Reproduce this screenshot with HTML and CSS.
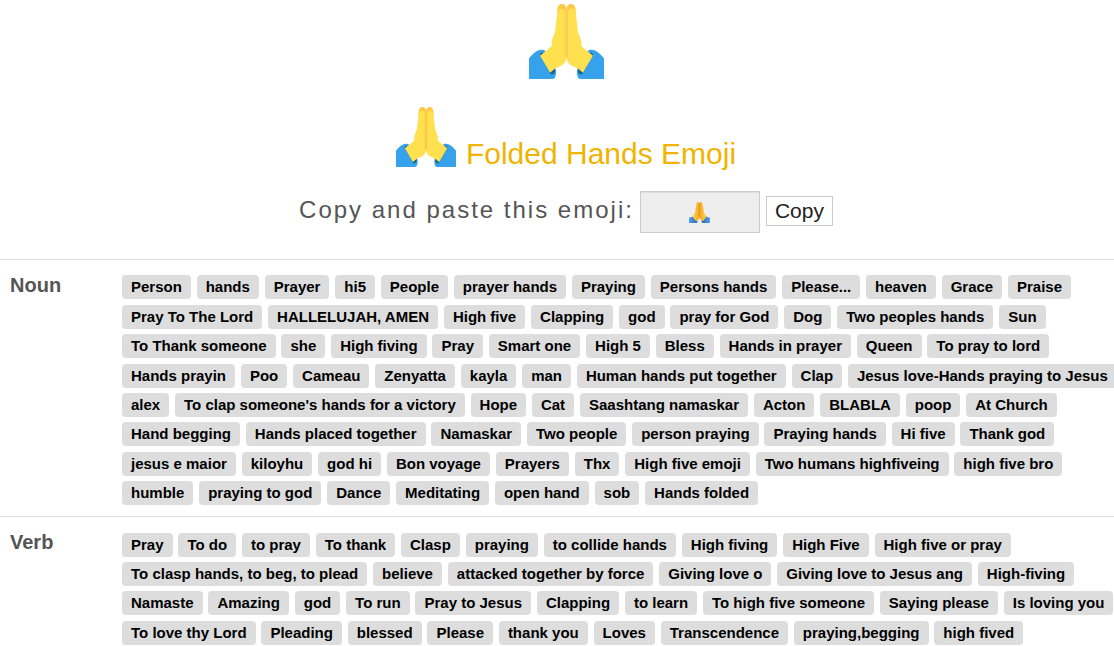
FILE: index.html
```html
<!DOCTYPE html>
<html lang="en">
<head>
    <meta charset="utf-8">
    <title>Folded Hands Emoji</title>
    <link rel="stylesheet" href="styles.css">
</head>
<body>
    <svg width="0" height="0" class="defs" aria-hidden="true">
        <symbol id="hands" viewBox="0 0 36 36">
            <g id="half">
                <path fill="#36a2eb" d="M0 26.200C2 23.500 4.200 22 6 22c1 0 1.600.2 2 .8l4.700 8.200c.3 1 .4 2 .2 2.800-.2 1.300-.6 2.200-1.700 2.200H0z"/>
                <path fill="#1a6691" d="M5.300 24.600c0-1 .6-1.600 1.400-1.200l5.800 8.100c.1 1.700-.6 2.500-2.100 2.200z"/>
                <path fill="#ffc845" d="M13.500 4C13.600 1.200 14.300 0 15.800 0 17.200 0 18 1 18 2.500V26l-3-1z"/>
                <path fill="#ffe04f" d="M17.300 4.400c0-1.300-.7-2.100-1.800-2.100-1.200 0-1.900.8-2 2.100l-.9 8.300c-.1 1.500-1.700 4-1.700 5.600v1.900L5.300 24.800 10.100 33 12.500 31C14.500 30 17.300 29.500 18 26.200c-.5-.3-.7-.7-.7-1.200z"/>
            </g>
            <use href="#half" transform="matrix(-1 0 0 1 36 0)"/>
        </symbol>
    </svg>

    <div class="header">
        <svg class="emoji-large" role="img" aria-label="Folded Hands"><use href="#hands"/></svg>
        <h1><svg class="emoji-title" aria-hidden="true"><use href="#hands"/></svg><span>Folded Hands Emoji</span></h1>
        <div class="copy">
            <label for="emoji">Copy and paste this emoji:</label>
            <input type="text" id="emoji" readonly>
            <button type="button">Copy</button>
        </div>
    </div>

    <table class="meanings">
        <tr>
            <th scope="row">Noun</th>
            <td>
                <a href="#">Person</a> <a href="#">hands</a> <a href="#">Prayer</a> <a href="#">hi5</a> <a href="#">People</a> <a href="#">prayer hands</a> <a href="#">Praying</a> <a href="#">Persons hands</a> <a href="#">Please...</a> <a href="#">heaven</a> <a href="#">Grace</a> <a href="#">Praise</a><br>
                <a href="#">Pray To The Lord</a> <a href="#">HALLELUJAH, AMEN</a> <a href="#">High five</a> <a href="#">Clapping</a> <a href="#">god</a> <a href="#">pray for God</a> <a href="#">Dog</a> <a href="#">Two peoples hands</a> <a href="#">Sun</a><br>
                <a href="#">To Thank someone</a> <a href="#">she</a> <a href="#">High fiving</a> <a href="#">Pray</a> <a href="#">Smart one</a> <a href="#">High 5</a> <a href="#">Bless</a> <a href="#">Hands in prayer</a> <a href="#">Queen</a> <a href="#">To pray to lord</a><br>
                <a href="#">Hands prayin</a> <a href="#">Poo</a> <a href="#">Cameau</a> <a href="#">Zenyatta</a> <a href="#">kayla</a> <a href="#">man</a> <a href="#">Human hands put together</a> <a href="#">Clap</a> <a href="#">Jesus love-Hands praying to Jesus</a><br>
                <a href="#">alex</a> <a href="#">To clap someone's hands for a victory</a> <a href="#">Hope</a> <a href="#">Cat</a> <a href="#">Saashtang namaskar</a> <a href="#">Acton</a> <a href="#">BLABLA</a> <a href="#">poop</a> <a href="#">At Church</a><br>
                <a href="#">Hand begging</a> <a href="#">Hands placed together</a> <a href="#">Namaskar</a> <a href="#">Two people</a> <a href="#">person praying</a> <a href="#">Praying hands</a> <a href="#">Hi five</a> <a href="#">Thank god</a><br>
                <a href="#">jesus e maior</a> <a href="#">kiloyhu</a> <a href="#">god hi</a> <a href="#">Bon voyage</a> <a href="#">Prayers</a> <a href="#">Thx</a> <a href="#">High five emoji</a> <a href="#">Two humans highfiveing</a> <a href="#">high five bro</a><br>
                <a href="#">humble</a> <a href="#">praying to god</a> <a href="#">Dance</a> <a href="#">Meditating</a> <a href="#">open hand</a> <a href="#">sob</a> <a href="#">Hands folded</a>
            </td>
        </tr>
        <tr>
            <th scope="row">Verb</th>
            <td>
                <a href="#">Pray</a> <a href="#">To do</a> <a href="#">to pray</a> <a href="#">To thank</a> <a href="#">Clasp</a> <a href="#">praying</a> <a href="#">to collide hands</a> <a href="#">High fiving</a> <a href="#">High Five</a> <a href="#">High five or pray</a><br>
                <a href="#">To clasp hands, to beg, to plead</a> <a href="#">believe</a> <a href="#">attacked together by force</a> <a href="#">Giving love o</a> <a href="#">Giving love to Jesus ang</a> <a href="#">High-fiving</a><br>
                <a href="#">Namaste</a> <a href="#">Amazing</a> <a href="#">god</a> <a href="#">To run</a> <a href="#">Pray to Jesus</a> <a href="#">Clapping</a> <a href="#">to learn</a> <a href="#">To high five someone</a> <a href="#">Saying please</a> <a href="#">Is loving you</a><br>
                <a href="#">To love thy Lord</a> <a href="#">Pleading</a> <a href="#">blessed</a> <a href="#">Please</a> <a href="#">thank you</a> <a href="#">Loves</a> <a href="#">Transcendence</a> <a href="#">praying,begging</a> <a href="#">high fived</a>
            </td>
        </tr>
    </table>
</body>
</html>
```
FILE: styles.css
```css
body {
    margin: 0;
    overflow-x: hidden;
    background: #fff;
    color: #555;
    font-family: "Liberation Sans", Arial, sans-serif;
    font-size: 21px;
    line-height: 1.4;
}

.defs {
    display: block;
}

.header {
    display: flex;
    flex-direction: column;
    align-items: center;
    padding: 4px 0 26px 18px;
}

.emoji-large {
    width: 75px;
    height: 75px;
}

.emoji-title {
    width: 60px;
    height: 60px;
}

h1 {
    display: flex;
    align-items: flex-end;
    gap: 10px;
    margin: 28px 0 24px;
    color: #f0b400;
    font-size: 30px;
    font-weight: normal;
    line-height: 26px;
}

.copy {
    display: flex;
    align-items: center;
    gap: 6px;
}

.copy label {
    font-size: 24px;
    line-height: 30px;
    letter-spacing: 2px;
    padding-bottom: 4px;
}

.copy input {
    box-sizing: border-box;
    width: 120px;
    height: 42px;
    border: 1px solid #ccc;
    box-shadow: inset 0 1px 1px rgba(0, 0, 0, .075);
    background: #eee url("data:image/svg+xml,%3Csvg xmlns='http://www.w3.org/2000/svg' viewBox='0 0 36 36'%3E%3ClinearGradient id='s' x2='1'%3E%3Cstop stop-color='%235b9df0'/%3E%3Cstop offset='1' stop-color='%232463ae'/%3E%3C/linearGradient%3E%3ClinearGradient id='h' x2='1'%3E%3Cstop stop-color='%23ffd54a'/%3E%3Cstop offset='1' stop-color='%23f5a623'/%3E%3C/linearGradient%3E%3Cg id='a'%3E%3Cpath fill='url(%23s)' d='M0 27L7 25l8 8-2 3H0z'/%3E%3Cpath fill='url(%23h)' d='M13 3c0-4 5-4 5 0v24c-1 4-4 4-6 6l-6-8 4-6z'/%3E%3C/g%3E%3Cuse href='%23a' transform='matrix(-1 0 0 1 36 0)'/%3E%3Cpath stroke='%23c67c15' d='M18 2v24'/%3E%3C/svg%3E") no-repeat center / 21px 21px;
}

.copy button {
    height: 30px;
    padding: 0 8px;
    border: 1px solid #ccc;
    background: #fff;
    color: #222;
    font: 21px/28px "Liberation Sans", Arial, sans-serif;
    margin-bottom: 2px;
}

.meanings {
    width: 100%;
    table-layout: fixed;
    border-collapse: collapse;
}

.meanings tr {
    border-top: 1px solid #ddd;
}

.meanings th {
    width: 102px;
    padding: 11px 10px;
    font-size: 20px;
    text-align: left;
    vertical-align: top;
}

.meanings td {
    padding: 11px 0 10px;
    white-space: nowrap;
}

.meanings a {
    display: inline-block;
    padding: 0 9px;
    border-radius: 4px;
    background: #ddd;
    color: #000;
    font-size: 15px;
    font-weight: bold;
    line-height: 24px;
    text-decoration: none;
    vertical-align: middle;
}
```
